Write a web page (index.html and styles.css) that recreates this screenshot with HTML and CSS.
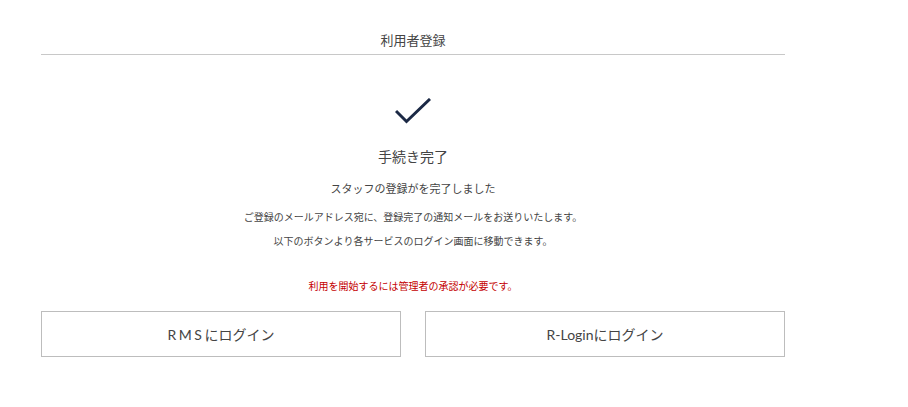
FILE: index.html
```html
<!DOCTYPE html>
<html lang="ja">
<head>
    <meta charset="UTF-8">
    <meta name="viewport" content="width=device-width, initial-scale=1.0">
    <title>利用者登録</title>
    <link rel="stylesheet" href="styles.css">
</head>
<body>
    <div class="container">
        <h1 class="page-title">利用者登録</h1>
        <div class="complete">
            <svg class="check-icon" width="36" height="26" viewBox="0 0 36 26" aria-hidden="true">
                <polyline points="1,13 11.5,23.5 35,1" fill="none" stroke="#1b2945" stroke-width="3"/>
            </svg>
            <h2 class="complete-title">手続き完了</h2>
            <p class="lead">スタッフの登録がを完了しました</p>
            <p class="note">ご登録のメールアドレス宛に、登録完了の通知メールをお送りいたします。</p>
            <p class="note note-tight">以下のボタンより各サービスのログイン画面に移動できます。</p>
            <p class="warning">利用を開始するには管理者の承認が必要です。</p>
        </div>
        <div class="buttons">
            <a class="login-button" href="#"><span class="spaced">RMS</span>にログイン</a>
            <a class="login-button" href="#">R-Loginにログイン</a>
        </div>
    </div>
</body>
</html>
```

FILE: styles.css
```css
:root {
    --text-color: #444444;
    --line-color: #c8c8c8;
    --border-color: #bdbdbd;
    --warning-color: #c40000;
}
body {
    margin: 0;
    font-family: "Lato", "Noto Sans CJK JP", sans-serif;
    color: var(--text-color);
    background: #ffffff;
}
.container {
    width: 744px;
    margin: 0 0 0 41px;
}
.page-title {
    margin: 0;
    padding: 30px 0 4px;
    font-size: 13px;
    line-height: 20px;
    font-weight: normal;
    text-align: center;
    border-bottom: 1px solid var(--line-color);
}
.complete {
    display: flex;
    flex-direction: column;
    align-items: center;
    text-align: center;
}
.check-icon {
    display: block;
    margin-top: 43px;
}
.complete-title {
    margin: 23px 0 0;
    font-size: 14px;
    line-height: 20px;
    font-weight: normal;
}
.lead {
    margin: 14px 0 0;
    font-size: 11px;
    line-height: 16px;
}
.note {
    margin: 12px 0 0;
    font-size: 10px;
    line-height: 16px;
}
.note-tight {
    margin-top: 8px;
}
.warning {
    margin: 29px 0 0;
    font-size: 10px;
    line-height: 16px;
    color: var(--warning-color);
}
.buttons {
    display: grid;
    grid-template-columns: 1fr 1fr;
    gap: 24px;
    margin-top: 17px;
}
.login-button {
    display: flex;
    justify-content: center;
    align-items: center;
    height: 44px;
    border: 1px solid var(--border-color);
    color: var(--text-color);
    font-size: 14px;
    text-decoration: none;
}
.spaced {
    letter-spacing: 0.18em;
}
```
